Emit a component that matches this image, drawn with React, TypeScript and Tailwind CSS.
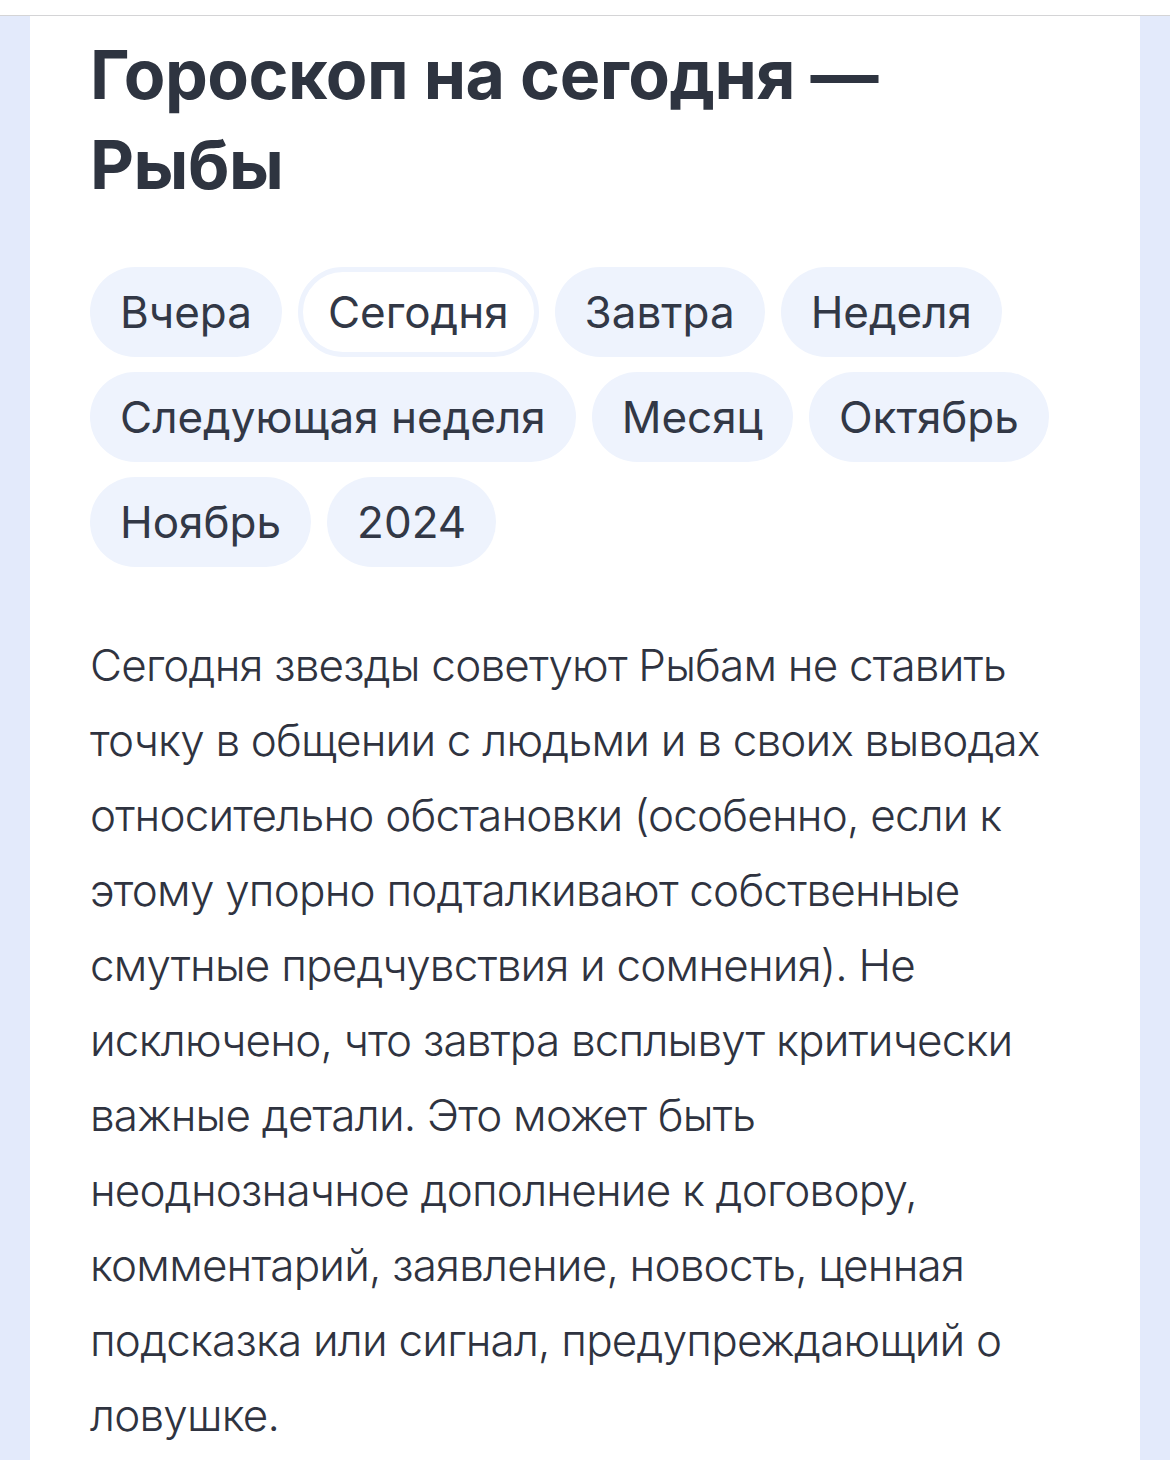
import React from "react";

const pills = [
  ["Вчера", "Сегодня", "Завтра", "Неделя"],
  ["Следующая неделя", "Месяц", "Октябрь"],
  ["Ноябрь", "2024"],
];

const lines = [
  "Сегодня звезды советуют Рыбам не ставить",
  "точку в общении с людьми и в своих выводах",
  "относительно обстановки (особенно, если к",
  "этому упорно подталкивают собственные",
  "смутные предчувствия и сомнения). Не",
  "исключено, что завтра всплывут критически",
  "важные детали. Это может быть",
  "неоднозначное дополнение к договору,",
  "комментарий, заявление, новость, ценная",
  "подсказка или сигнал, предупреждающий о",
  "ловушке.",
];

export default function App() {
  return (
    <div
      className="w-[1170px] h-[1460px] overflow-hidden bg-white"
      style={{ fontFamily: "Inter, 'Noto Sans', sans-serif" }}
    >
      <div className="h-[15px] bg-white" />
      <div className="h-px bg-[#d4d4d6]" />
      <div className="flex h-[1444px]">
        <div className="w-[30px] bg-[#e3eafb]" />
        <div className="flex-1 bg-white px-[60px] pt-[13px]">
          <h1 className="text-[68px] font-bold leading-[90px] tracking-[-0.5px] text-[#2e3440]">
            Гороскоп на сегодня —<br />Рыбы
          </h1>
          <div className="mt-[58px] flex flex-col gap-[15px]">
            {pills.map((row, i) => (
              <div key={i} className="flex gap-[16px]">
                {row.map((p) =>
                  p === "Сегодня" ? (
                    <div
                      key={p}
                      className="h-[90px] rounded-full border-[5px] border-[#eef3fd] bg-white px-[25px] flex items-center text-[44px] text-[#323846]"
                    >
                      {p}
                    </div>
                  ) : (
                    <div
                      key={p}
                      className="h-[90px] rounded-full bg-[#eef3fd] px-[30px] flex items-center text-[44px] text-[#323846]"
                    >
                      {p}
                    </div>
                  )
                )}
              </div>
            ))}
          </div>
          <div className="mt-[61px] text-[44px] font-light leading-[75px] text-[#2f3340] tracking-[-0.8px]">
            {lines.map((l, i) => (
              <div key={i} className="whitespace-nowrap">
                {l}
              </div>
            ))}
          </div>
        </div>
        <div className="w-[30px] bg-[#e3eafb]" />
      </div>
    </div>
  );
}
